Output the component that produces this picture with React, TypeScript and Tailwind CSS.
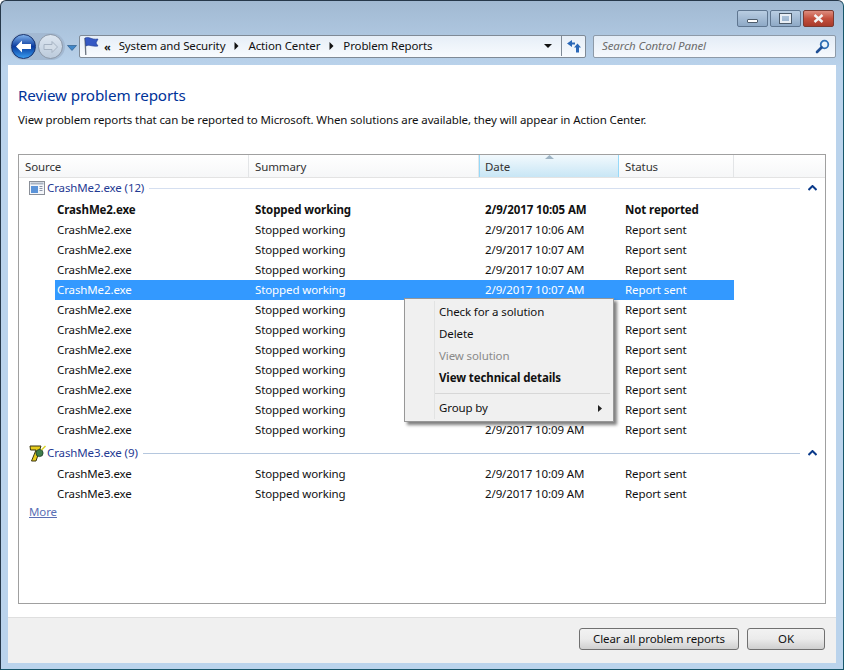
const font = "[font-family:'Noto_Sans',sans-serif]";

// dates of the rows behind the open context menu can't be read, so they stay empty
const group1 = [
  { date: "2/9/2017 10:05 AM", status: "Not reported", bold: true },
  { date: "2/9/2017 10:06 AM", status: "Report sent" },
  { date: "2/9/2017 10:07 AM", status: "Report sent" },
  { date: "2/9/2017 10:07 AM", status: "Report sent" },
  { date: "2/9/2017 10:07 AM", status: "Report sent", selected: true },
  { date: "", status: "Report sent" },
  { date: "", status: "Report sent" },
  { date: "", status: "Report sent" },
  { date: "", status: "Report sent" },
  { date: "", status: "Report sent" },
  { date: "", status: "Report sent" },
  { date: "2/9/2017 10:09 AM", status: "Report sent" },
];

type RowProps = { source: string; date: string; status: string; bold?: boolean; selected?: boolean };

function Row({ source, date, status, bold, selected }: RowProps) {
  return (
    <div
      className={`ml-9 grid h-5 w-[679px] grid-cols-[194px_230px_140px_115px] items-center ${bold ? "font-bold" : ""} ${
        selected ? "bg-[#3399ff] text-white" : "text-[#111]"
      }`}
    >
      <div className="pl-[2px]">{source}</div>
      <div className="pl-[6px]">Stopped working</div>
      <div className="pl-[6px]">{date}</div>
      <div className="pl-[6px]">{status}</div>
    </div>
  );
}

function GroupHeader({ icon, label, line }: { icon: React.ReactNode; label: string; line: string }) {
  return (
    <div className="flex h-5 items-center pl-[10px] pr-[8px]">
      <div className="flex w-[18px] shrink-0 items-center">{icon}</div>
      <span className="text-[#1f3a93]">{label}</span>
      <div className={`ml-[5px] h-px flex-1 ${line}`} />
      <svg width="9" height="6" viewBox="0 0 9 6" className="ml-[8px]">
        <path d="M0.5 5 L4.5 1 L8.5 5" fill="none" stroke="#0a3a8a" strokeWidth="2" />
      </svg>
    </div>
  );
}

function WindowIcon() {
  return (
    <svg width="16" height="14" viewBox="0 0 16 14">
      <rect x="0.5" y="0.5" width="15" height="13" fill="#f4f6fa" stroke="#8a8f98" />
      <rect x="1.5" y="1.5" width="13" height="2" fill="#a9b3c2" />
      <rect x="2" y="5" width="7" height="7" fill="#5b93d8" />
      <path d="M10.5 5.5h3M10.5 7.5h3M10.5 9.5h3" stroke="#8a94a6" />
    </svg>
  );
}

function ZIcon() {
  return (
    <svg width="17" height="17" viewBox="0 0 17 17">
      <path d="M1 1 H12 L7 16 H2.5 L7 5 H1.5 Z" fill="#e6cc1c" stroke="#3b3510" strokeWidth="1" />
      <circle cx="10.5" cy="8" r="3.6" fill="#3f7d4a" stroke="#1c3d28" strokeWidth="0.8" />
      <path d="M12.5 5 L16.5 1" stroke="#d9d020" strokeWidth="1.5" />
    </svg>
  );
}

function NavButtons() {
  return (
    <div className="flex w-[79px] shrink-0 items-center pl-[9px]">
      <div className="flex h-[27px] w-[55px] items-center rounded-full bg-[#a3b9d2] pl-px">
        <div className="flex h-[25px] w-[25px] items-center justify-center rounded-full border border-[#16316d] bg-gradient-to-b from-[#7fb0ea] via-[#0c3a9e] to-[#3b9bee]">
          <svg width="17" height="13" viewBox="0 0 17 13">
            <path d="M7 0.5 L1 6.5 L7 12.5 V9 H16 V4 H7 Z" fill="#fff" />
          </svg>
        </div>
        <div className="ml-[2px] flex h-[25px] w-[25px] items-center justify-center rounded-full border border-[#8c98a8] bg-gradient-to-b from-[#dde6f0] to-[#bccbdc]">
          <svg width="15" height="12" viewBox="0 0 15 12">
            <path d="M9 0.5 L14.5 6 L9 11.5 V8.5 H1 V3.5 H9 Z" fill="#d3dde8" stroke="#a5b2c2" />
          </svg>
        </div>
      </div>
      <svg width="10" height="6" viewBox="0 0 10 6" className="ml-[2px] mt-[2px]">
        <path d="M0.5 0.5 H9.5 L5 5.5 Z" fill="#3f86c8" stroke="#24527f" strokeWidth="0.6" />
      </svg>
    </div>
  );
}

function Breadcrumb() {
  const arrow = (
    <svg width="5" height="8" viewBox="0 0 5 8" className="mx-[9px]">
      <path d="M0.5 0 L4.5 4 L0.5 8 Z" fill="#111" />
    </svg>
  );
  return (
    <div className="flex h-[23px] w-[507px] shrink-0 items-center rounded-[2px] border border-[#7f8a96] bg-gradient-to-b from-[#e6eef7] to-[#f8fbfe] pb-px text-[#111]">
      <svg width="18" height="20" viewBox="0 0 18 20" className="ml-[2px]">
        <path d="M3 2 L3.8 19" stroke="#6b7480" strokeWidth="1.3" />
        <path d="M3 2 C7 0 9 4 16 3 L14 7 L16 10 C10 11 7 8 4 10 Z" fill="#3458c4" stroke="#1f3a90" strokeWidth="0.6" />
      </svg>
      <span className="ml-[4px] text-[11px] font-bold leading-none">«</span>
      <span className="ml-[8px]">System and Security</span>
      {arrow}
      <span>Action Center</span>
      {arrow}
      <span>Problem Reports</span>
      <div className="flex-1" />
      <svg width="8" height="4" viewBox="0 0 8 4" className="mr-[9px]">
        <path d="M0 0 H8 L4 4 Z" fill="#111" />
      </svg>
      <div className="flex h-full w-[24px] items-center justify-center border-l border-[#7f8a96]">
        <svg width="16" height="14" viewBox="0 0 16 14">
          <path d="M6 1 L1 4.5 L6 8 V5.5 H9 V3.5 H6 Z" fill="#2a68b8" />
          <path d="M10 13.5 V8.5 H8 L11.5 4.5 L15 8.5 H13 V13.5 Z" fill="#2a68b8" />
        </svg>
      </div>
    </div>
  );
}

function CaptionButtons() {
  return (
    <div className="flex h-[17px] justify-end pr-[9px]">
      <div className="flex h-[17px] w-[31px] items-center justify-center rounded-[2px] border border-[#5f7690] bg-gradient-to-b from-[#b9cde2] to-[#8ea9c6]">
        <div className="mt-[4px] h-[4px] w-[11px] rounded-[1px] border border-[#4d5c6c] bg-white" />
      </div>
      <div className="ml-[2px] flex h-[17px] w-[31px] items-center justify-center rounded-[2px] border border-[#5f7690] bg-gradient-to-b from-[#b9cde2] to-[#8ea9c6]">
        <div className="h-[9px] w-[11px] border-2 border-[#e8eef5] outline outline-1 outline-[#4d5c6c]" />
      </div>
      <div className="ml-[2px] flex h-[17px] w-[31px] items-center justify-center rounded-[2px] border border-[#7a3a32] bg-gradient-to-b from-[#dd8c7e] via-[#c4503e] to-[#a83a2a]">
        <svg width="11" height="9" viewBox="0 0 11 9">
          <path d="M1.5 1 L9.5 8 M9.5 1 L1.5 8" stroke="#f4f4f4" strokeWidth="2.4" />
        </svg>
      </div>
    </div>
  );
}

function ContextMenu() {
  return (
    <div className="absolute left-[385px] top-[143px] flex h-[124px] w-[210px] flex-col border border-[#979797] bg-[#f0f0f0] pl-[34px] text-[#111] shadow-[3px_3px_3px_rgba(60,60,60,0.65)]">
      <div className="absolute bottom-[2px] left-[29px] top-[2px] w-px bg-[#e2e3e3]" />
      <div className="mt-[2px] flex h-[22px] items-center">Check for a solution</div>
      <div className="flex h-[22px] items-center">Delete</div>
      <div className="flex h-[22px] items-center text-[#8a8a8a]">View solution</div>
      <div className="flex h-[22px] items-center font-bold">View technical details</div>
      <div className="ml-[-5px] mr-[3px] mt-[4px] h-px bg-[#d7d7d7]" />
      <div className="mt-[3px] flex h-[22px] items-center justify-between pr-[11px]">
        <span>Group by</span>
        <svg width="4" height="7" viewBox="0 0 4 7">
          <path d="M0 0 L4 3.5 L0 7 Z" fill="#222" />
        </svg>
      </div>
    </div>
  );
}

export default function App() {
  return (
    <div
      className={`flex h-[670px] w-[844px] flex-col overflow-hidden rounded-t-[6px] border border-[#26384a] border-b-[#17566a] border-r-[#17566a] bg-gradient-to-b from-[#a1b9d2] from-0% to-[#bad3ec] to-[10%] text-[11.5px] tracking-[-0.11px] ${font}`}
    >
      <div className="h-[9px] shrink-0" />
      <CaptionButtons />
      <div className="mt-[8px] flex h-[23px] shrink-0 items-center">
        <NavButtons />
        <div className="-ml-[1px]">
          <Breadcrumb />
        </div>
        <div className="ml-[7px] flex h-[23px] w-[243px] items-center justify-between rounded-[2px] border border-[#8d9aa8] bg-gradient-to-b from-[#e3ecf6] to-[#f6f9fd] pb-px pl-[8px] pr-[5px] italic text-[#6d6d6d]">
          <span>Search Control Panel</span>
          <svg width="15" height="15" viewBox="0 0 15 15">
            <circle cx="9.5" cy="5.5" r="3.8" fill="#eaf3fb" stroke="#2f6fb5" strokeWidth="1.8" />
            <path d="M6.5 8.5 L2 13" stroke="#1f4f95" strokeWidth="2.6" strokeLinecap="round" />
          </svg>
        </div>
      </div>

      <div className="mx-[7px] mt-[7px] flex flex-1 flex-col bg-white">
        <div className="flex-1 px-[10px]">
          <h1 className="mt-[19px] h-[22px] text-[15.2px] leading-[22px] text-[#003399]">Review problem reports</h1>
          <p className="mt-[4px] h-[20px] leading-[20px] text-[#111]">
            View problem reports that can be reported to Microsoft. When solutions are available, they will appear in
            Action Center.
          </p>
          <div className="relative mt-[24px] h-[450px] w-[808px] border border-[#a0a0a0]">
            <div className="grid h-[23px] grid-cols-[230px_230px_140px_115px_1fr] border-b border-[#e3e3e3] bg-gradient-to-b from-white to-[#f6f7f8] text-[#333]">
              <div className="flex items-center border-r border-[#e3e5e7] pl-[6px] pt-[2px]">Source</div>
              <div className="flex items-center border-r border-[#e3e5e7] pl-[6px] pt-[2px]">Summary</div>
              <div className="relative flex items-center border-x border-[#96d9f9] bg-gradient-to-b from-[#f2f9fd] to-[#c8e6f5] pl-[5px] pt-[2px]">
                <svg width="9" height="4" viewBox="0 0 9 4" className="absolute left-[65px] top-0">
                  <path d="M0 4 L4.5 0 L9 4 Z" fill="#9fb4c4" />
                </svg>
                Date
              </div>
              <div className="flex items-center border-r border-[#e3e5e7] pl-[6px] pt-[2px]">Status</div>
              <div />
            </div>
            <GroupHeader icon={<WindowIcon />} label="CrashMe2.exe (12)" line="bg-[#d5dff0]" />
            <div className="h-[2px]" />
            {group1.map((r, i) => (
              <Row key={i} source="CrashMe2.exe" {...r} />
            ))}
            <div className="h-[3px]" />
            <GroupHeader icon={<ZIcon />} label="CrashMe3.exe (9)" line="bg-[#b5c7de]" />
            <div className="h-px" />
            <Row source="CrashMe3.exe" date="2/9/2017 10:09 AM" status="Report sent" />
            <Row source="CrashMe3.exe" date="2/9/2017 10:09 AM" status="Report sent" />
            <div className="flex h-4 items-center pl-[10px] text-[#5a6fb5] underline">More</div>
            <ContextMenu />
          </div>
        </div>
        <div className="flex h-[46px] shrink-0 items-center justify-end border-t border-[#dfdfdf] bg-[#f0f0f0] pb-[3px] pr-[11px] text-[#111]">
          <button className="h-[22px] w-[160px] rounded-[3px] border border-[#707070] bg-gradient-to-b from-[#f2f2f2] via-[#ebebeb] to-[#cfcfcf]">
            Clear all problem reports
          </button>
          <button className="ml-[8px] h-[22px] w-[78px] rounded-[3px] border border-[#707070] bg-gradient-to-b from-[#f2f2f2] via-[#ebebeb] to-[#cfcfcf]">
            OK
          </button>
        </div>
      </div>
      <div className="h-[6px] shrink-0" />
    </div>
  );
}
